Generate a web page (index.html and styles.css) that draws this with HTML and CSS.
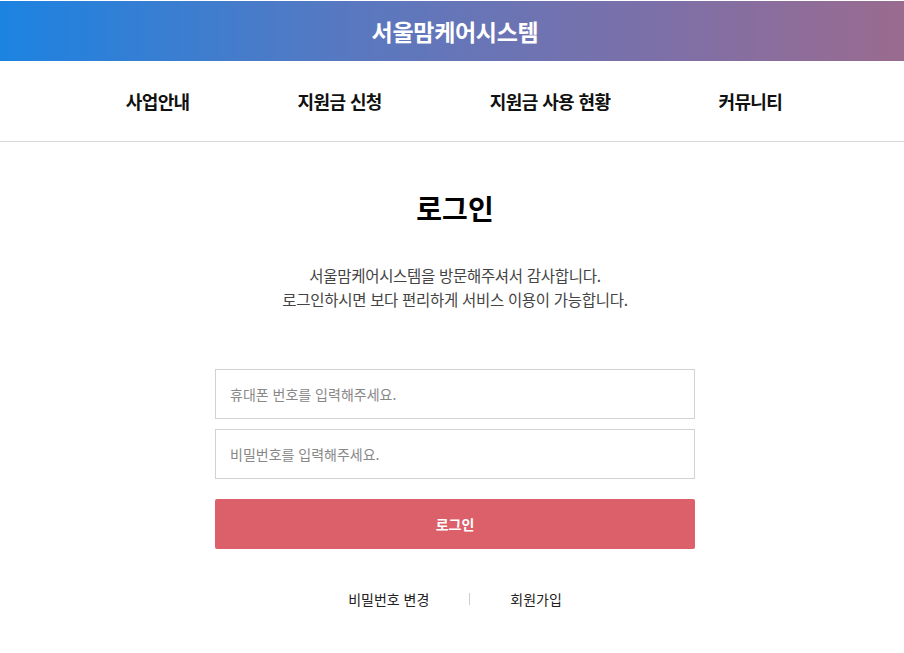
FILE: index.html
```html
<!DOCTYPE html>
<html lang="ko">
<head>
<meta charset="utf-8">
<title>로그인 - 서울맘케어시스템</title>
<link rel="stylesheet" href="styles.css">
</head>
<body>
<header class="top">
  <h1 class="brand">서울맘케어시스템</h1>
</header>
<nav class="gnb">
  <a href="#">사업안내</a>
  <a href="#">지원금 신청</a>
  <a href="#">지원금 사용 현황</a>
  <a href="#">커뮤니티</a>
</nav>
<main class="login">
  <h2 class="title">로그인</h2>
  <p class="desc">서울맘케어시스템을 방문해주셔서 감사합니다.<br>로그인하시면 보다 편리하게 서비스 이용이 가능합니다.</p>
  <form class="form">
    <input class="field" type="text" placeholder="휴대폰 번호를 입력해주세요.">
    <input class="field" type="password" placeholder="비밀번호를 입력해주세요.">
    <button class="btn" type="button">로그인</button>
  </form>
  <div class="links">
    <a href="#">비밀번호 변경</a>
    <span class="bar"></span>
    <a href="#">회원가입</a>
  </div>
</main>
</body>
</html>
```

FILE: styles.css
```css
* { box-sizing: border-box; }
html, body { margin: 0; padding: 0; background: #fff; }
body {
  font-family: "Noto Sans CJK KR", "Noto Sans", sans-serif;
  color: #111;
}
.top {
  height: 60px;
  margin-top: 1px;
  background: linear-gradient(90deg, #1c83e1 0%, #5a78bf 40%, #7f6fa6 75%, #9a6b8f 100%);
  display: flex;
  align-items: center;
  justify-content: center;
  padding-left: 6px;
}
.brand {
  margin: 0;
  color: #fff;
  font-size: 23px;
  font-weight: 700;
  letter-spacing: -0.3px;
}
.gnb {
  height: 81px;
  border-bottom: 1px solid #d9d9d9;
  display: flex;
  align-items: center;
  justify-content: center;
  gap: 108px;
  padding-left: 4px;
}
.gnb a {
  color: #111;
  text-decoration: none;
  font-size: 18px;
  font-weight: 700;
  letter-spacing: -0.6px;
}
.login {
  display: flex;
  flex-direction: column;
  align-items: center;
  padding-left: 6px;
}
.title {
  margin: 46px 0 0;
  font-size: 28px;
  font-weight: 700;
  line-height: 40px;
  color: #000;
}
.desc {
  margin: 35px 0 0;
  text-align: center;
  font-size: 15.5px;
  line-height: 24px;
  color: #444;
  letter-spacing: -0.3px;
}
.form {
  margin-top: 58px;
  width: 480px;
  display: flex;
  flex-direction: column;
}
.field {
  height: 50px;
  border: 1px solid #d2d2d2;
  padding: 0 14px;
  font-family: inherit;
  font-size: 14px;
  color: #333;
  margin-bottom: 10px;
  outline: none;
}
.field::placeholder { color: #888; }
.btn {
  margin-top: 10px;
  height: 50px;
  border: 0;
  border-radius: 2px;
  background: #dc606a;
  color: #fff;
  font-family: inherit;
  font-size: 14px;
  font-weight: 700;
}
.links {
  margin-top: 40px;
  display: flex;
  align-items: center;
  gap: 40px;
}
.links a {
  color: #222;
  text-decoration: none;
  font-size: 14px;
}
.bar {
  width: 1px;
  height: 12px;
  background: #ccc;
}
```
